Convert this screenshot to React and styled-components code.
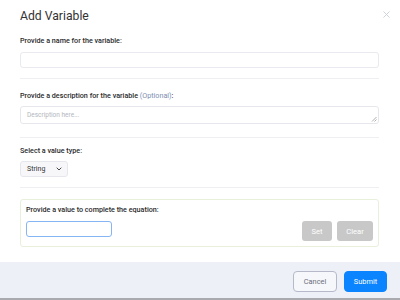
import styled, { createGlobalStyle } from "styled-components";

const GlobalStyle = createGlobalStyle`
  html, body {
    margin: 0;
    padding: 0;
    background: #ffffff;
    font-family: Roboto, "Liberation Sans", Arial, sans-serif;
  }
`;

const Modal = styled.div`
  width: 400px;
  height: 300px;
  display: flex;
  flex-direction: column;
  background: #fff;
  overflow: hidden;
`;

const Body = styled.div`
  flex: 1;
  padding: 0 21px 0 20px;
  position: relative;
`;

const Title = styled.h2`
  margin: 0;
  padding-top: 8px;
  font-size: 12.2px;
  line-height: 16px;
  font-weight: 400;
  color: #333;
`;

const Close = styled.button`
  position: absolute;
  top: 9px;
  right: 9px;
  width: 10px;
  height: 10px;
  padding: 0;
  border: none;
  background: none;
  display: flex;
  align-items: center;
  justify-content: center;
`;

const Section = styled.div`
  padding: ${(p) => p.$pad || "0"};
  border-bottom: ${(p) => (p.$line ? "1px solid #eeeff3" : "none")};
`;

const Label = styled.div`
  font-size: 7.2px;
  line-height: 10px;
  font-weight: 500;
  color: #2a2a2a;
  margin-bottom: ${(p) => p.$gap || "6px"};
`;

const Optional = styled.span`
  color: #7d8db3;
  font-weight: 400;
`;

const TextInput = styled.div`
  box-sizing: border-box;
  height: 16px;
  border: 1px solid #e9eaef;
  border-radius: 3px;
  background: #fff;
`;

const TextArea = styled.div`
  box-sizing: border-box;
  height: 18px;
  border: 1px solid #e6e7ec;
  border-radius: 3px;
  position: relative;
  padding: 4px 6px;
  font-size: 6.5px;
  line-height: 8px;
  color: #b3b6bd;
`;

const Grip = styled.svg`
  position: absolute;
  right: 1px;
  bottom: 1px;
`;

const Select = styled.div`
  box-sizing: border-box;
  width: 48px;
  height: 16px;
  border: 1px solid #e6e7ec;
  border-radius: 3px;
  background: #f7f7f9;
  display: flex;
  align-items: center;
  justify-content: space-between;
  padding: 0 5px 0 6px;
  font-size: 7px;
  color: #333;
`;

const ValueBox = styled.div`
  margin-top: 11px;
  box-sizing: border-box;
  height: 48px;
  border: 1px solid #e8f0dc;
  border-radius: 3px;
  padding: 5px 5px 0 5px;
`;

const ValueRow = styled.div`
  display: flex;
  align-items: flex-start;
  gap: 5px;
`;

const ValueInput = styled.div`
  box-sizing: border-box;
  width: 86px;
  height: 16px;
  border: 1px solid #85b5f2;
  border-radius: 3px;
  margin-right: auto;
`;

const GrayButton = styled.button`
  box-sizing: border-box;
  width: ${(p) => p.$w};
  height: 20px;
  border: none;
  border-radius: 3px;
  background: #c8c8c8;
  color: #fff;
  font-family: inherit;
  font-size: 7.6px;
  padding: 0;
`;

const Footer = styled.div`
  box-sizing: border-box;
  height: 38px;
  background: #eef0f8;
  border-bottom: 2px solid #a9aab0;
  display: flex;
  justify-content: flex-end;
  align-items: flex-start;
  padding: 9px 13px 0 0;
  gap: 7px;
`;

const FooterButton = styled.button`
  box-sizing: border-box;
  width: ${(p) => p.$w};
  height: 21px;
  border-radius: 4px;
  font-family: inherit;
  font-size: 7.4px;
  padding: 0;
  border: 1px solid ${(p) => (p.$primary ? "#0b85ff" : "#b5b9c9")};
  background: ${(p) => (p.$primary ? "#0b85ff" : "#f6f7fb")};
  color: ${(p) => (p.$primary ? "#fff" : "#6b6f7a")};
`;

export default function App() {
  return (
    <>
      <GlobalStyle />
      <Modal>
        <Body>
          <Title>Add Variable</Title>
          <Close aria-label="Close">
            <svg width="7" height="7" viewBox="0 0 7 7">
              <path d="M0.5 0.5L6.5 6.5M6.5 0.5L0.5 6.5" stroke="#c9ced8" strokeWidth="0.9" />
            </svg>
          </Close>

          <Section $pad="12px 0 10px" $line>
            <Label>Provide a name for the variable:</Label>
            <TextInput />
          </Section>

          <Section $pad="12px 0 13px" $line>
            <Label $gap="5px">
              Provide a description for the variable <Optional>(Optional)</Optional>:
            </Label>
            <TextArea>
              Description here...
              <Grip width="6" height="6" viewBox="0 0 6 6">
                <path d="M5.5 1L1 5.5M5.5 3.5L3.5 5.5" stroke="#9a9a9a" strokeWidth="0.8" />
              </Grip>
            </TextArea>
          </Section>

          <Section $pad="8px 0 10px" $line>
            <Label $gap="5px">Select a value type:</Label>
            <Select>
              String
              <svg width="6" height="4" viewBox="0 0 6 4">
                <path d="M0.7 0.7L3 3L5.3 0.7" stroke="#333" strokeWidth="0.9" fill="none" />
              </svg>
            </Select>
          </Section>

          <ValueBox>
            <Label $gap="6px">Provide a value to complete the equation:</Label>
            <ValueRow>
              <ValueInput />
              <GrayButton $w="30px">Set</GrayButton>
              <GrayButton $w="36px">Clear</GrayButton>
            </ValueRow>
          </ValueBox>
        </Body>
        <Footer>
          <FooterButton $w="44px">Cancel</FooterButton>
          <FooterButton $w="43px" $primary>
            Submit
          </FooterButton>
        </Footer>
      </Modal>
    </>
  );
}
